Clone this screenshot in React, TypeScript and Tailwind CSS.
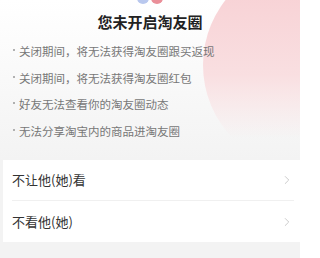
import { ChevronRight } from "lucide-react";

const notes = [
  "关闭期间，将无法获得淘友圈跟买返现",
  "关闭期间，将无法获得淘友圈红包",
  "好友无法查看你的淘友圈动态",
  "无法分享淘宝内的商品进淘友圈",
];

const rows = ["不让他(她)看", "不看他(她)"];

export default function App() {
  return (
    <div
      className="w-[300px] h-[258px] overflow-hidden bg-[#f3f3f3]"
      style={{ fontFamily: '"Noto Sans CJK SC", "Noto Sans", sans-serif' }}
    >
      <div className="relative h-[160px] overflow-hidden bg-gradient-to-b from-white to-[#f3f3f3]">
        {/* pink decoration */}
        <div className="absolute left-[203px] top-[-40px] w-[210px] h-[210px] rounded-full bg-gradient-to-b from-[#f7cdd1] via-[#f9dfe1] via-55% to-transparent to-85%" />
        {/* logo, cut off at top */}
        <div className="absolute left-[137px] top-[-11px] w-[12px] h-[15px] rounded-full bg-[#b9c8ee]" />
        <div className="absolute left-[151px] top-[-11px] w-[12px] h-[15px] rounded-full bg-[#ea8f99]" />

        <div className="relative flex flex-col">
          <h1 className="mt-[12px] text-center text-[15px] leading-[20px] font-bold text-[#222]">
            您未开启淘友圈
          </h1>
          <ul className="mt-[11px] flex flex-col gap-[10px] pl-[13px]">
            {notes.map((n) => (
              <li key={n} className="flex items-center text-[11.5px] leading-[16.7px] text-[#777]">
                <span className="mr-[4px] mb-[3px] h-[2px] w-[2px] rounded-full bg-[#999]" />
                {n}
              </li>
            ))}
          </ul>
        </div>
      </div>

      <div className="ml-[3px] bg-white">
        {rows.map((r, i) => (
          <div key={r} className="flex h-[41px] items-center pl-[9px] pr-[6px]">
            <div
              className={
                "flex h-full flex-1 items-center justify-between " +
                (i === 0 ? "border-b border-[#f0f0f0]" : "")
              }
            >
              <span className="text-[13px] text-[#333]">{r}</span>
              <ChevronRight size={14} strokeWidth={1.3} className="text-[#bbb]" />
            </div>
          </div>
        ))}
      </div>
    </div>
  );
}
